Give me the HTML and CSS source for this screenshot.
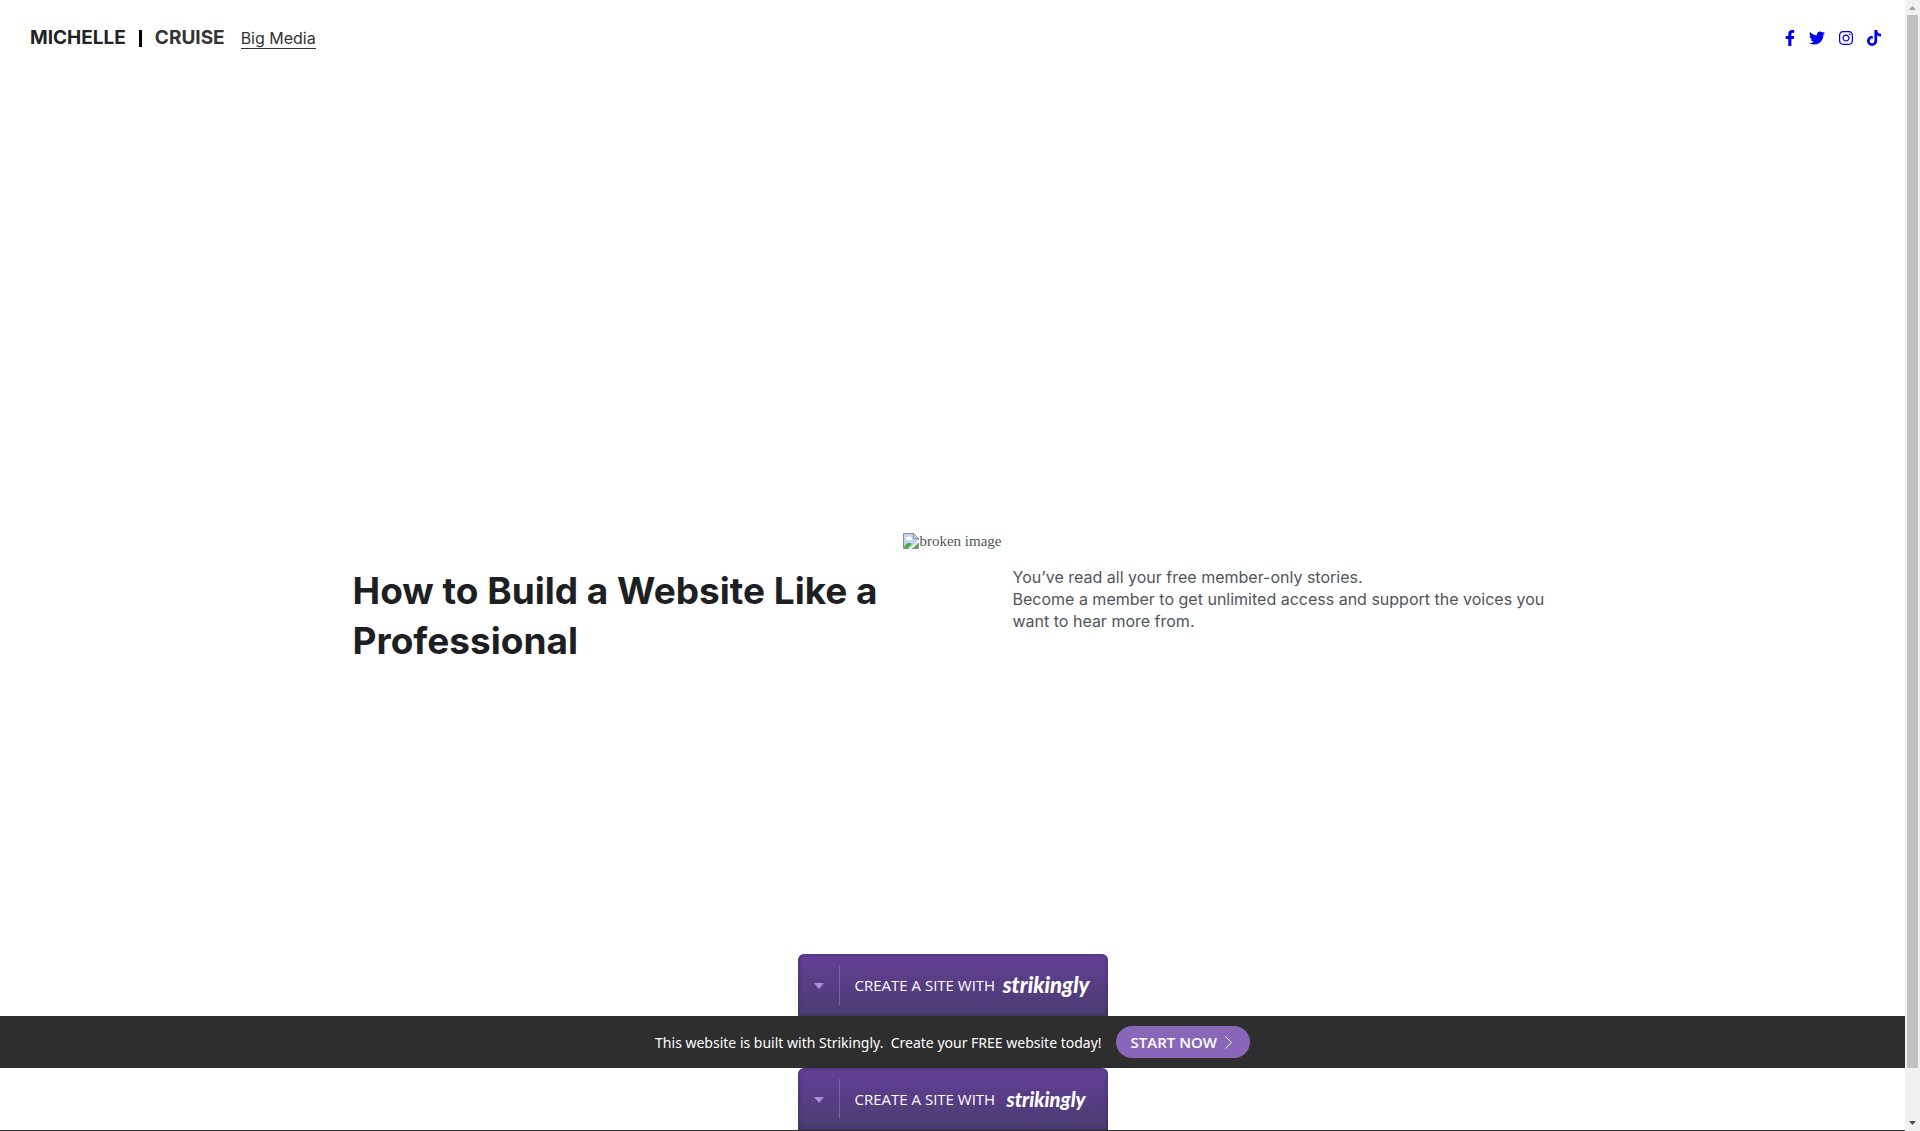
FILE: index.html
```html
<!DOCTYPE html>
<html lang="en">
<head>
<meta charset="utf-8">
<title>Michelle Cruise</title>
<link rel="stylesheet" href="styles.css">
</head>
<body>
<div class="page">
  <header class="header">
    <div class="brand"><span class="brand-first">MICHELLE</span><span class="brand-bar"></span><span class="brand-last">CRUISE</span></div>
    <nav class="nav"><a class="nav-link" href="#">Big Media</a></nav>
    <div class="social">
      <a href="#" aria-label="Facebook"><svg width="10" height="16" viewBox="0 0 320 512"><path d="M279.14 288l14.22-92.66h-88.91v-60.13c0-25.35 12.42-50.06 52.24-50.06h40.42V6.26S260.43 0 225.36 0c-73.22 0-121.08 44.38-121.08 124.72v70.62H22.89V288h81.39v224h100.17V288z"/></svg></a>
      <a href="#" aria-label="Twitter"><svg width="16" height="16" viewBox="0 0 512 512"><path d="M459.37 151.716c.325 4.548.325 9.097.325 13.645 0 138.72-105.583 298.558-298.558 298.558-59.452 0-114.68-17.219-161.137-47.106 8.447.974 16.568 1.299 25.34 1.299 49.055 0 94.213-16.568 130.274-44.832-46.132-.975-84.792-31.188-98.112-72.772 6.498.974 12.995 1.624 19.818 1.624 9.421 0 18.843-1.3 27.614-3.573-48.081-9.747-84.143-51.98-84.143-102.985v-1.299c13.969 7.797 30.214 12.67 47.431 13.319-28.264-18.843-46.781-51.005-46.781-87.391 0-19.492 5.197-37.36 14.294-52.954 51.655 63.675 129.3 105.258 216.365 109.807-1.624-7.797-2.599-15.918-2.599-24.04 0-57.828 46.782-104.934 104.934-104.934 30.213 0 57.502 12.67 76.67 33.137 23.715-4.548 46.456-13.32 66.599-25.34-7.798 24.366-24.366 44.833-46.132 57.827 21.117-2.273 41.584-8.122 60.426-16.243-14.292 20.791-32.161 39.308-52.628 54.253z"/></svg></a>
      <a href="#" aria-label="Instagram"><svg width="14" height="16" viewBox="0 0 448 512"><path d="M224.1 141c-63.6 0-114.9 51.3-114.9 114.9s51.3 114.9 114.9 114.9S339 319.5 339 255.9 287.7 141 224.1 141zm0 189.6c-41.1 0-74.7-33.5-74.7-74.7s33.5-74.7 74.7-74.7 74.7 33.5 74.7 74.7-33.6 74.7-74.7 74.7zm146.4-194.3c0 14.9-12 26.8-26.8 26.8-14.9 0-26.8-12-26.8-26.8s12-26.8 26.8-26.8 26.8 12 26.8 26.8zm76.1 27.2c-1.7-35.9-9.9-67.7-36.2-93.9-26.2-26.2-58-34.4-93.9-36.2-37-2.1-147.9-2.1-184.9 0-35.8 1.7-67.6 9.9-93.9 36.1s-34.4 58-36.2 93.9c-2.1 37-2.1 147.9 0 184.9 1.7 35.9 9.9 67.7 36.2 93.9s58 34.4 93.9 36.2c37 2.1 147.9 2.1 184.9 0 35.9-1.7 67.7-9.9 93.9-36.2 26.2-26.2 34.4-58 36.2-93.9 2.1-37 2.1-147.8 0-184.8zM398.8 388c-7.8 19.6-22.9 34.7-42.6 42.6-29.5 11.7-99.5 9-132.1 9s-102.7 2.6-132.1-9c-19.6-7.8-34.7-22.9-42.6-42.6-11.7-29.5-9-99.5-9-132.1s-2.6-102.7 9-132.1c7.8-19.6 22.9-34.7 42.6-42.6 29.5-11.7 99.5-9 132.1-9s102.7-2.6 132.1 9c19.6 7.8 34.7 22.9 42.6 42.6 11.7 29.5 9 99.5 9 132.1s2.7 102.7-9 132.1z"/></svg></a>
      <a href="#" aria-label="TikTok"><svg width="14" height="16" viewBox="0 0 448 512"><path d="M448 209.91a210.06 210.06 0 0 1-122.77-39.25v178.72A162.55 162.55 0 1 1 185 188.31v89.89a74.62 74.62 0 1 0 52.23 71.18V0h88a121.18 121.18 0 0 0 1.86 22.17 122.18 122.18 0 0 0 53.91 80.22 121.43 121.43 0 0 0 67 20.14z"/></svg></a>
    </div>
  </header>

  <main class="hero">
    <div class="broken">
      <svg width="16" height="16" viewBox="0 0 16 16"><path fill="#c3d5f7" d="M1 1h9l5 5v2l-7 7H1z"/><path fill="#fff" d="M3 6a2 2 0 0 1 3-2 2 2 0 0 1 3 2v1H3z"/><path fill="#56ab3c" d="M1 15c1-4 3-5 5-5 1 0 2 0 3 1l-4 4zM10 15l5-5v5z"/><path fill="none" stroke="#8c8c8c" d="M15.500 7V5.500L10.500.5H.5v15H6M10.500.5v5h5M9 15.500h6.500V10"/></svg><span>broken image</span>
    </div>
    <div class="columns">
      <h1 class="title">How to Build a Website Like a Professional</h1>
      <p class="lead">You’ve read all your free member-only stories.<br>Become a member to get unlimited access and support the voices you want to hear more from.</p>
    </div>
  </main>

  <footer class="footer">
    <div class="badge">
      <button class="badge-toggle" aria-label="Collapse"><svg width="10" height="6" viewBox="0 0 10 6"><path d="M0 0h10L5 6z"/></svg></button>
      <a class="badge-link" href="#"><span>CREATE A SITE WITH</span><span class="logo">strikingly</span></a>
    </div>
    <div class="promo">
      <span>This website is built with Strikingly.&nbsp; Create your FREE website today!</span>
      <button class="start">START NOW <svg width="7" height="13" viewBox="0 0 7 13"><path d="M.5.5l6 6-6 6"/></svg></button>
    </div>
    <div class="badge">
      <button class="badge-toggle" aria-label="Collapse"><svg width="10" height="6" viewBox="0 0 10 6"><path d="M0 0h10L5 6z"/></svg></button>
      <a class="badge-link" href="#"><span>CREATE A SITE WITH</span><span class="logo logo-small">strikingly</span></a>
    </div>
  </footer>
</div>
<div class="scrollbar" aria-hidden="true">
  <svg width="15" height="15" viewBox="0 0 15 15"><path fill="#a3a3a3" d="M4 10h7L7.500 6z"/></svg>
  <div class="thumb"></div>
  <svg width="15" height="15" viewBox="0 0 15 15"><path fill="#505050" d="M4 5h7L7.500 9z"/></svg>
</div>
</body>
</html>
```
FILE: styles.css
```css
* { box-sizing: border-box; }

body {
  margin: 0;
  display: flex;
  min-height: 100vh;
  background: #fff;
  color: #50555c;
  font-family: Inter, "Liberation Sans", sans-serif;
}

.page {
  flex: 1;
  display: flex;
  flex-direction: column;
}

.header {
  display: flex;
  align-items: center;
  height: 76px;
  padding: 0 24px 0 30px;
}

.brand {
  display: flex;
  align-items: center;
  gap: 13px;
  font-size: 19px;
  line-height: 22px;
  font-weight: 700;
  color: #222;
}

.brand-bar {
  width: 3px;
  height: 17px;
  background: #000;
}

.brand-last { color: #333; }

.nav { margin-left: 16px; }

.nav-link {
  display: block;
  font-size: 16px;
  line-height: 20px;
  color: #333;
  text-decoration: none;
  border-bottom: 1px solid #333;
}

.social {
  display: flex;
  gap: 14px;
  margin-left: auto;
}

.social a { display: flex; }
.social svg { fill: #00e; }

.hero {
  flex: 1;
  display: flex;
  flex-direction: column;
  justify-content: center;
  padding-top: 168px;
}

.broken {
  display: flex;
  justify-content: center;
  font: 15px/17px "Liberation Serif", serif;
}

.columns {
  display: grid;
  grid-template-columns: 1fr 1fr;
  gap: 120px;
  width: 1200px;
  max-width: 100%;
  margin: 16px auto 0;
}

.title {
  margin: 0;
  font-size: 37px;
  line-height: 50px;
  font-weight: 700;
  color: #1d2023;
}

.lead {
  margin: 0;
  font-size: 16px;
  line-height: 22px;
}

.footer {
  display: flex;
  flex-direction: column;
  align-items: center;
  font-family: "Noto Sans", "Open Sans", sans-serif;
  font-size: 14px;
  border-bottom: 1px solid #2e2e2e;
}

.badge {
  display: flex;
  align-items: center;
  width: 310px;
  height: 62px;
  border-radius: 6px 6px 0 0;
  background: linear-gradient(#633f97, #4b3c71);
  box-shadow: inset 0 0 4px rgba(0, 0, 0, 0.3);
}

.badge-toggle {
  display: flex;
  align-items: center;
  justify-content: center;
  width: 42px;
  height: 40px;
  padding: 2px 0 0 2px;
  border: 0;
  border-right: 1px solid #7c60a8;
  background: none;
}

.badge-toggle svg { fill: #b08edb; }

.badge-link {
  display: flex;
  flex: 1;
  align-items: center;
  justify-content: space-between;
  padding: 0 18px 0 15px;
  color: #fff;
  font: 15px/20px "Open Sans", "Noto Sans", sans-serif;
  text-decoration: none;
  white-space: nowrap;
}

.logo {
  font: italic 900 22px/24px Lato, sans-serif;
}

.logo-small {
  font-size: 20px;
  padding-right: 4px;
}

.promo {
  display: flex;
  align-items: center;
  justify-content: center;
  gap: 14px;
  align-self: stretch;
  height: 52px;
  background: #2e2e2e;
  color: #fff;
}

.start {
  display: flex;
  align-items: center;
  gap: 8px;
  height: 32px;
  padding: 0 18px 0 15px;
  border: 0;
  border-radius: 16px;
  background: #8867b8;
  color: #fff;
  font: 600 15px "Open Sans", "Noto Sans", sans-serif;
}

.start svg { fill: none; stroke: #fff; }

.scrollbar {
  display: flex;
  flex-direction: column;
  width: 15px;
  background: #f1f1f1;
}

.thumb {
  flex: 1;
  margin: 0 2px 48px;
  background: #c1c1c1;
}
```
